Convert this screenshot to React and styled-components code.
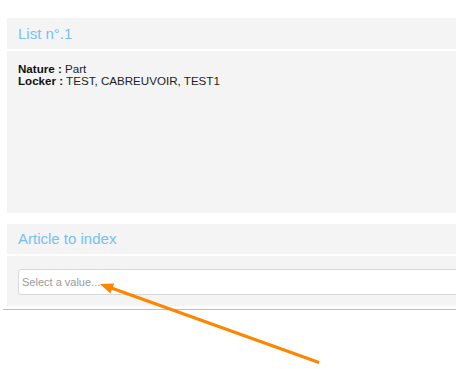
import React from "react";
import styled, { createGlobalStyle } from "styled-components";

const Global = createGlobalStyle`
  html, body { margin: 0; padding: 0; background: #fff; overflow: hidden; }
  body { font-family: "Liberation Sans", Arial, sans-serif; }
`;

const Page = styled.div`
  position: relative;
  width: 456px;
  height: 369px;
  overflow: hidden;
`;

const Container = styled.div`
  margin-left: 3px;
  width: 520px;
  padding: 18px 0 3px 4px;
  border-bottom: 1px solid #bdbdbd;
  display: flex;
  flex-direction: column;
  gap: 11px;
`;

const Panel = styled.section`
  display: flex;
  flex-direction: column;
  gap: 2px;
`;

const Header = styled.h3`
  margin: 0;
  height: ${(p) => p.$h}px;
  box-sizing: border-box;
  background: #f4f4f4;
  color: #76c0f6;
  font-weight: normal;
  font-size: 15px;
  line-height: ${(p) => p.$h}px;
  padding-left: 11px;
`;

const Body = styled.div`
  background: #f4f4f4;
  height: ${(p) => p.$h}px;
  box-sizing: border-box;
  padding: ${(p) => p.$pad};
  font-size: 11.6px;
  color: #222;
`;

const Line = styled.div`
  line-height: 11.5px;
  b { font-weight: bold; color: #111; }
`;

const Select = styled.div`
  height: 26px;
  box-sizing: border-box;
  border: 1px solid #d8d8d8;
  border-radius: 3px;
  background: #fff;
  color: #9a9a9a;
  font-size: 11px;
  line-height: 24px;
  padding-left: 3px;
`;

const Arrow = styled.svg`
  position: absolute;
  left: 0;
  top: 0;
  pointer-events: none;
`;

export default function App() {
  return (
    <Page>
      <Global />
      <Container>
        <Panel>
          <Header $h={31}>List n°.1</Header>
          <Body $h={162} $pad="12px 0 0 11px">
            <Line><b>Nature :</b> Part</Line>
            <Line><b>Locker :</b> TEST, CABREUVOIR, TEST1</Line>
          </Body>
        </Panel>
        <Panel>
          <Header $h={30}>Article to index</Header>
          <Body $h={50} $pad="13px 0 0 11px">
            <Select>Select a value...</Select>
          </Body>
        </Panel>
      </Container>
      <Arrow width="456" height="369" viewBox="0 0 456 369">
        <line x1="319" y1="362.5" x2="110" y2="287.5" stroke="#ff8400" strokeWidth="3" />
        <polygon points="100,284 114.2,283.4 110.4,293.6" fill="#ff8400" />
      </Arrow>
    </Page>
  );
}
